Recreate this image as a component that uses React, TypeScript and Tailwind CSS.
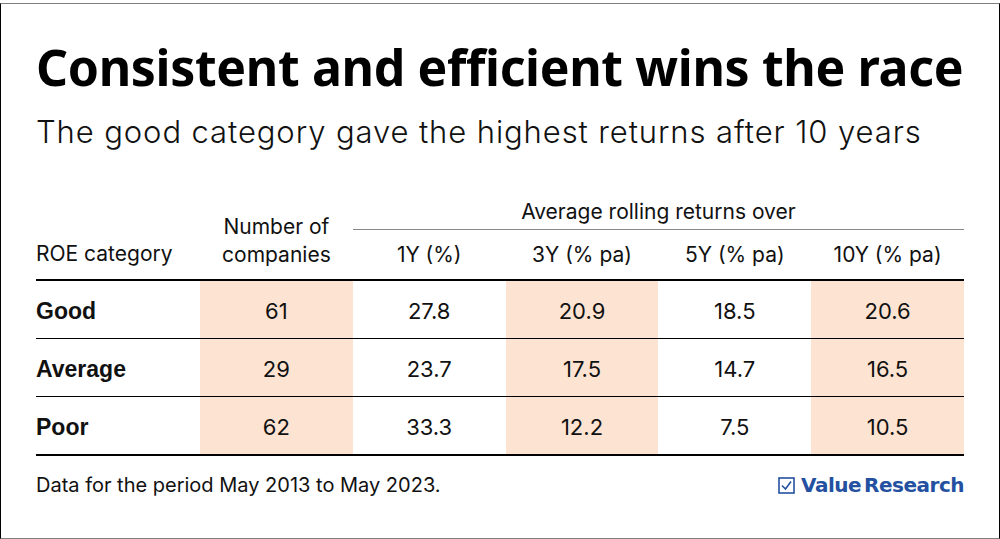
const rows = [
  { label: "Good", n: "61", y1: "27.8", y3: "20.9", y5: "18.5", y10: "20.6" },
  { label: "Average", n: "29", y1: "23.7", y3: "17.5", y5: "14.7", y10: "16.5" },
  { label: "Poor", n: "62", y1: "33.3", y3: "12.2", y5: "7.5", y10: "10.5" },
];

const shade = "bg-[#fde3d2]";

const CheckBox = () => (
  <svg width="17" height="17" viewBox="0 0 17 17" className="mr-[6px]">
    <rect x="1" y="1" width="15" height="15" fill="none" stroke="#2350a0" strokeWidth="1.6" />
    <path d="M4 8.5 L7.5 12 L13 4.5" fill="none" stroke="#2350a0" strokeWidth="1.6" />
  </svg>
);

export default function App() {
  return (
    <div className="w-[1000px] h-[539px] bg-white pt-[3px] font-['Inter',sans-serif] text-[#111]">
      <div className="h-[536px] border-t border-b border-t-[#808080] border-b-[#808080] border-l border-r border-l-black border-r-black pl-[35px] pr-[35px]">
        {/* Title */}
        <h1 className="mt-[33px] font-['Noto_Sans',sans-serif] text-[50px] leading-[60px] font-bold tracking-[-0.35px] text-black whitespace-nowrap">
          Consistent and efficient wins the race
        </h1>
        <p className="mt-[15px] text-[31px] leading-[40px] font-light tracking-[0.9px] whitespace-nowrap">
          The good category gave the highest returns after 10 years
        </p>

        {/* Table */}
        <div className="mt-[42px] w-[928px] grid grid-cols-[164px_repeat(5,1fr)] text-[21px]">
          <div className="row-span-2 flex items-end pb-[10px]">ROE category</div>
          <div className="row-span-2 flex flex-col items-center justify-end pb-[10px] leading-[28px]">
            <span>Number of</span>
            <span>companies</span>
          </div>
          <div className="col-span-4 h-[36px] flex items-center justify-center border-b border-[#888]">
            Average rolling returns over
          </div>
          <div className="h-[49px] flex items-center justify-center">1Y (%)</div>
          <div className="h-[49px] flex items-center justify-center">3Y (% pa)</div>
          <div className="h-[49px] flex items-center justify-center">5Y (% pa)</div>
          <div className="h-[49px] flex items-center justify-center">10Y (% pa)</div>

          <div className="col-span-6 h-[2px] bg-black" />

          {rows.map((r, i) => (
            <div key={r.label} className="contents">
              <div className="h-[57px] pt-[3px] flex items-center font-['Liberation_Sans',sans-serif] font-bold text-[23px]">{r.label}</div>
              <div className={`h-[57px] pt-[3px] flex items-center justify-center text-[22px] ${shade}`}>{r.n}</div>
              <div className="h-[57px] pt-[3px] flex items-center justify-center text-[22px]">{r.y1}</div>
              <div className={`h-[57px] pt-[3px] flex items-center justify-center text-[22px] ${shade}`}>{r.y3}</div>
              <div className="h-[57px] pt-[3px] flex items-center justify-center text-[22px]">{r.y5}</div>
              <div className={`h-[57px] pt-[3px] flex items-center justify-center text-[22px] ${shade}`}>{r.y10}</div>
              {i < rows.length - 1 ? (
                <div className="col-span-6 h-[1px] bg-black" />
              ) : (
                <div className="col-span-6 h-[2px] bg-black" />
              )}
            </div>
          ))}
        </div>

        {/* Footer */}
        <div className="mt-[14px] w-[928px] flex items-center justify-between">
          <span className="text-[20px]">Data for the period May 2013 to May 2023.</span>
          <span className="flex items-center text-[#2350a0] font-['DejaVu_Sans',sans-serif] font-bold text-[20px] tracking-[-0.5px]">
            <CheckBox />
            Value<span className="ml-[3px]">Research</span>
          </span>
        </div>
      </div>
    </div>
  );
}
